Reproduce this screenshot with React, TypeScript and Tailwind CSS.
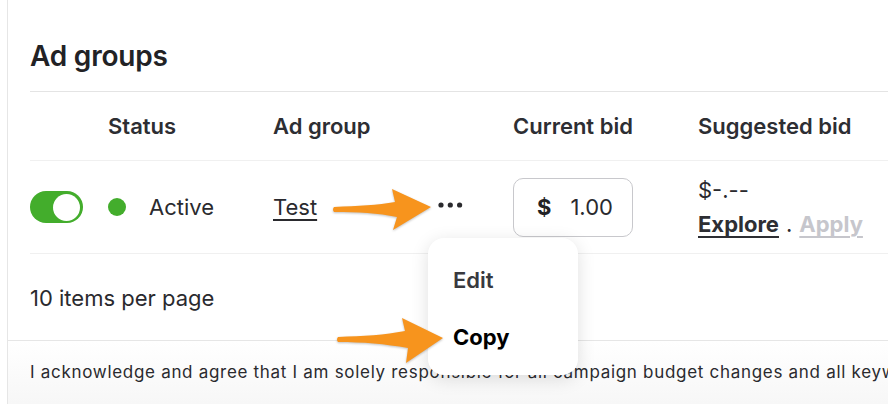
import React from "react";

function Arrow1() {
  return (
    <svg
      className="absolute left-[333px] top-[189px] drop-shadow-[0_1px_1px_rgba(0,0,0,0.25)]"
      width="100"
      height="44"
      viewBox="0 0 100 44"
    >
      <path
        d="M1,18 C25,17 45,16 62,13 L59,0 L98,18 L60,41 L64,28 C45,24 25,23 1,23 Q-1,20.5 1,18 Z"
        fill="#f7941d"
      />
    </svg>
  );
}

function Arrow2() {
  return (
    <svg
      className="absolute left-[337px] top-[317px] drop-shadow-[0_1px_1px_rgba(0,0,0,0.25)]"
      width="108"
      height="48"
      viewBox="0 0 108 48"
    >
      <path
        d="M1,20 C26,19 48,18 68,14 L65,1 L106,21 L69,46 L71,31 C48,27 26,25 1,25 Q-1,22.5 1,20 Z"
        fill="#f7941d"
      />
    </svg>
  );
}

export default function App() {
  return (
    <div className="relative w-[888px] h-[404px] overflow-hidden bg-white font-['Inter',sans-serif] text-[#222225]">
      <div className="ml-[7px] h-full border-l border-[#e6e6e6] flex flex-col">
        <div className="pl-[22px]">
          <div className="h-[92px] border-b border-[#e4e4e4] pt-[39px]">
            <h1 className="text-[28px] leading-[34px] font-semibold text-[#222225] tracking-[-0.2px]">
              Ad groups
            </h1>
          </div>
          <div className="h-[69px] border-b border-[#f0f0f0] grid grid-cols-[78px_165px_165px_75px_185px_1fr] items-center text-[22px] font-semibold text-[#2d2e33]">
            <div />
            <div>Status</div>
            <div>Ad group</div>
            <div />
            <div>Current bid</div>
            <div className="whitespace-nowrap">Suggested bid</div>
          </div>
          <div className="h-[93px] border-b border-[#f0f0f0] grid grid-cols-[78px_165px_165px_75px_185px_1fr] items-center text-[22px]">
            <div className="flex items-center">
              <div className="w-[53px] h-[32px] rounded-full bg-[#43ad2c] flex items-center justify-end pr-[3px]">
                <div className="w-[27px] h-[27px] rounded-full bg-white" />
              </div>
            </div>
            <div className="flex items-center gap-[23px]">
              <div className="w-[18px] h-[18px] rounded-full bg-[#43ad2c]" />
              <span className="text-[#2a2a2e]">Active</span>
            </div>
            <div>
              <span className="underline decoration-[1.5px] underline-offset-[4px] text-[#2a2a2e]">Test</span>
            </div>
            <div className="flex items-center">
              <svg width="25" height="6" viewBox="0 0 25 6" className="mb-[4px]">
                <circle cx="3" cy="3" r="2.6" fill="#2a2a2e" />
                <circle cx="12.3" cy="3" r="2.6" fill="#2a2a2e" />
                <circle cx="21.6" cy="3" r="2.6" fill="#2a2a2e" />
              </svg>
            </div>
            <div>
              <div className="w-[120px] h-[59px] rounded-[10px] border border-[#c8c8cc] flex items-center pl-[23px]">
                <span className="font-bold text-[#222225]">$</span>
                <span className="ml-[19px] text-[#2a2a2e]">1.00</span>
              </div>
            </div>
            <div className="flex flex-col leading-[34px] whitespace-nowrap">
              <span className="text-[#2a2a2e]">$-.--</span>
              <div className="flex items-center">
                <span className="font-bold underline decoration-[2px] underline-offset-[4px] text-[#2d2e33]">Explore</span>
                <span className="mx-[7px] text-[#2a2a2e]">.</span>
                <span className="font-bold underline decoration-[2px] underline-offset-[4px] text-[#c6c6cc]">Apply</span>
              </div>
            </div>
          </div>
          <div className="h-[86px] flex items-center pt-[3px] text-[22px] text-[#2a2a2e]">
            10 items per page
          </div>
        </div>
        <div className="flex-1 border-t border-[#e6e6e6] pl-[22px] pt-[19px] bg-gradient-to-b from-white to-[#f7f7f7] overflow-hidden">
          <p className="text-[17px] leading-[24px] tracking-[0.7px] whitespace-nowrap text-[#2a2a2e]">
            I acknowledge and agree that I am solely responsible for all campaign budget changes and all keyword bid changes.
          </p>
        </div>
      </div>

      <div className="absolute left-[428px] top-[238px] w-[150px] h-[137px] rounded-[16px] bg-white shadow-[0_4px_18px_rgba(0,0,0,0.13)] flex flex-col pl-[25px] text-[22px]">
        <div className="h-[57px] mt-[14px] flex items-center font-semibold text-[#38393e]">Edit</div>
        <div className="h-[57px] flex items-center font-bold text-black">Copy</div>
      </div>

      <Arrow1 />
      <Arrow2 />
    </div>
  );
}
